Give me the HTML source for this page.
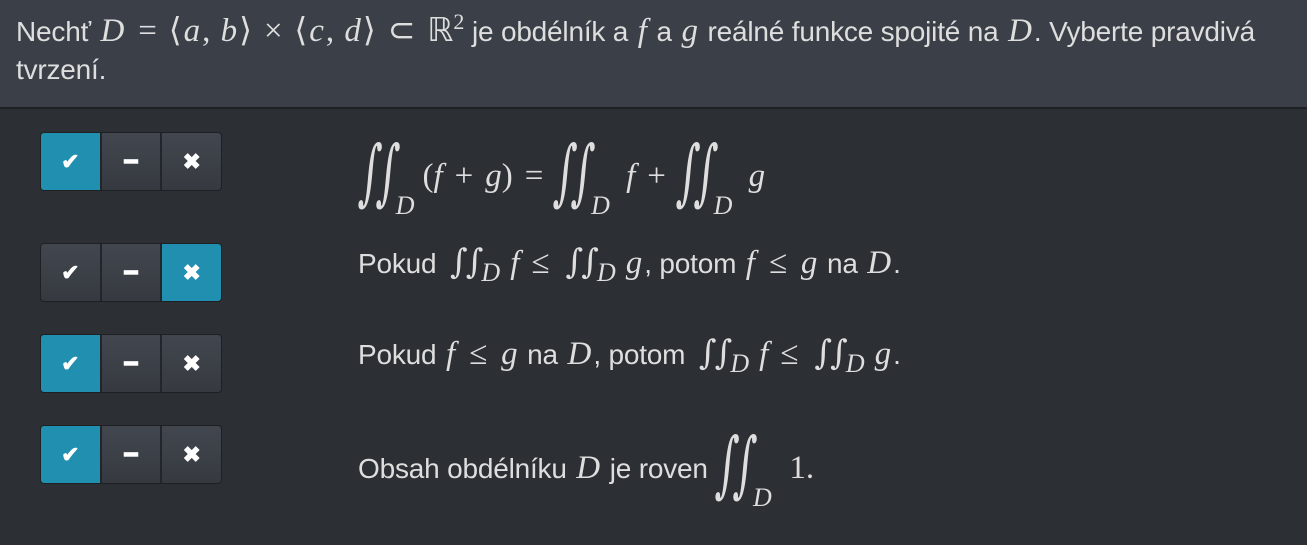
<!DOCTYPE html>
<html><head><meta charset="utf-8"><style>
body{margin:0;width:1307px;height:545px;background:#2c2f33;font-family:"Liberation Sans",sans-serif;color:#dedede;position:relative;overflow:hidden}
.hd{position:absolute;left:0;top:0;width:1307px;height:107px;background:#3b4048;border-bottom:2px solid #1f2124}
.t{position:absolute;white-space:nowrap;font-size:28px;letter-spacing:-0.2px}
.m{font-family:"Liberation Serif",serif;font-style:italic;font-size:33px;letter-spacing:0;margin:0 2px}
.r{font-family:"Liberation Serif",serif;font-style:normal;font-size:33px;letter-spacing:0}
.op{font-family:"Liberation Serif",serif;font-style:normal;font-size:33px;margin:0 12px}
.grp{position:absolute;left:40px;width:180px;height:57px;border:1px solid #1e2023;border-radius:4px;overflow:hidden;display:flex;background:linear-gradient(#42464e,#363a40)}
.grp div{flex:1;display:flex;align-items:center;justify-content:center;color:#fff;font-weight:bold;font-size:22px;border-right:2px solid #22252a}
.grp div:last-child{border-right:none}
.grp .on{background:#2190b0}
.int{font-family:"DejaVu Serif",serif;font-style:normal;display:inline-block;transform:scaleY(1.8) skewX(-8deg);letter-spacing:-3px;font-size:40px}
.ints{font-family:"DejaVu Serif",serif;font-style:normal;letter-spacing:-2px;font-size:34px;margin-left:4px}
sub{font-family:"Liberation Serif",serif;font-style:italic;font-size:26px;vertical-align:-8px;margin-right:10px}
sub.b{vertical-align:-28px;margin-right:8px}
</style></head><body>
<div class="hd"></div>
<div class="t" style="left:16px;top:9px">Nechť <span class="m">D</span><span class="op">=</span><span class="r">⟨</span><span class="m">a</span><span class="r">, </span><span class="m">b</span><span class="r">⟩</span><span class="op">×</span><span class="r">⟨</span><span class="m">c</span><span class="r">, </span><span class="m">d</span><span class="r">⟩</span><span class="op">⊂</span><span class="r">ℝ<sup style="font-size:22px">2</sup></span> je obdélník a <span class="m">f</span> a <span class="m">g</span> reálné funkce spojité na <span class="m">D</span>. Vyberte pravdivá</div>
<div class="t" style="left:16px;top:54px">tvrzení.</div>

<div class="grp" style="top:132px"><div class="on">✔</div><div>━</div><div>✖</div></div>
<div class="grp" style="top:243px"><div>✔</div><div>━</div><div class="on">✖</div></div>
<div class="grp" style="top:334px"><div class="on">✔</div><div>━</div><div>✖</div></div>
<div class="grp" style="top:425px"><div class="on">✔</div><div>━</div><div>✖</div></div>

<div class="t m" style="left:358px;top:150px"><span class="int">∫∫</span><sub class="b">D</sub><span class="r">(</span>f<span class="op">+</span>g<span class="r">)</span><span class="op">=</span><span class="int">∫∫</span><sub class="b">D</sub> f<span class="op">+</span><span class="int">∫∫</span><sub class="b">D</sub> g</div>

<div class="t" style="left:358px;top:242px">Pokud <span class="m"><span class="ints">∫∫</span><sub>D</sub>f<span class="op">≤</span><span class="ints">∫∫</span><sub>D</sub>g</span>, potom <span class="m">f</span><span class="op">≤</span><span class="m">g</span> na <span class="m">D</span>.</div>

<div class="t" style="left:358px;top:333px">Pokud <span class="m">f</span><span class="op">≤</span><span class="m">g</span> na <span class="m">D</span>, potom <span class="m"><span class="ints">∫∫</span><sub>D</sub>f<span class="op">≤</span><span class="ints">∫∫</span><sub>D</sub>g</span>.</div>

<div class="t" style="left:358px;top:442px">Obsah obdélníku <span class="m">D</span> je roven <span class="m"><span class="int">∫∫</span><sub class="b">D</sub></span> <span class="r">1.</span></div>
</body></html>
